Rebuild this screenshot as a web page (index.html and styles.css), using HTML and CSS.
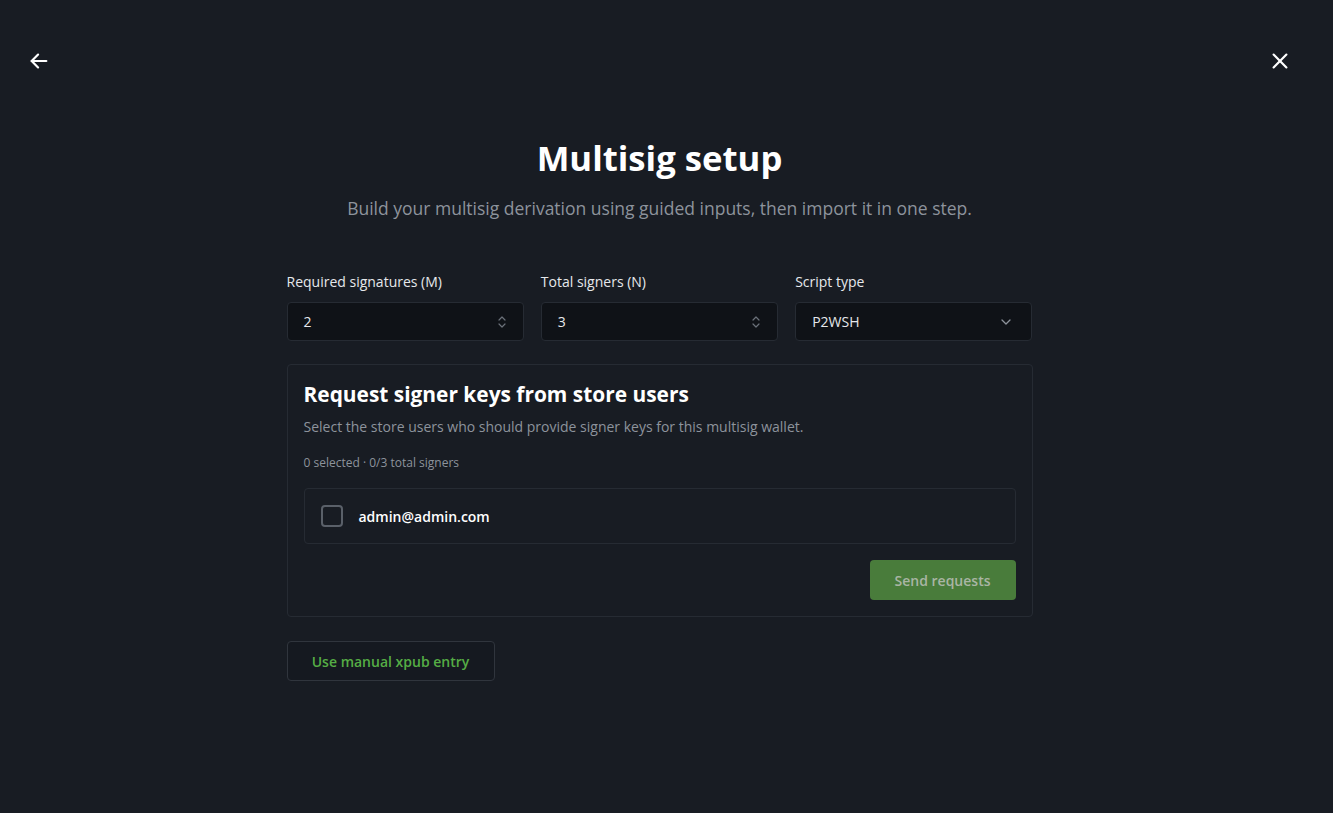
FILE: index.html
```html
<!DOCTYPE html>
<html lang="en">
<head>
<meta charset="utf-8">
<title>Multisig setup</title>
<link rel="stylesheet" href="styles.css">
</head>
<body>
<div class="page">
  <header class="topbar">
    <button class="icon-btn" aria-label="Back">
      <svg width="22" height="22" viewBox="0 0 24 24" fill="none" stroke="currentColor" stroke-width="2.4" stroke-linecap="round" stroke-linejoin="round"><path d="M20 12H4"/><path d="M11 5l-7 7 7 7"/></svg>
    </button>
    <button class="icon-btn" aria-label="Close">
      <svg width="22" height="22" viewBox="0 0 24 24" fill="none" stroke="currentColor" stroke-width="2.4" stroke-linecap="round"><path d="M5 5l14 14"/><path d="M19 5L5 19"/></svg>
    </button>
  </header>

  <main class="content">
    <h1 class="title">Multisig setup</h1>
    <p class="subtitle">Build your multisig derivation using guided inputs, then import it in one step.</p>

    <div class="fields">
      <div class="field">
        <label class="label">Required signatures (M)</label>
        <div class="input">
          <span>2</span>
          <svg class="spin" width="10" height="16" viewBox="0 0 10 16" fill="none" stroke="currentColor" stroke-width="1.2" stroke-linecap="round" stroke-linejoin="round"><path d="M2 6l3-3 3 3"/><path d="M2 10l3 3 3-3"/></svg>
        </div>
      </div>
      <div class="field">
        <label class="label">Total signers (N)</label>
        <div class="input">
          <span>3</span>
          <svg class="spin" width="10" height="16" viewBox="0 0 10 16" fill="none" stroke="currentColor" stroke-width="1.2" stroke-linecap="round" stroke-linejoin="round"><path d="M2 6l3-3 3 3"/><path d="M2 10l3 3 3-3"/></svg>
        </div>
      </div>
      <div class="field">
        <label class="label">Script type</label>
        <div class="input select">
          <span>P2WSH</span>
          <svg class="chev" width="14" height="14" viewBox="0 0 14 14" fill="none" stroke="currentColor" stroke-width="1.3" stroke-linecap="round" stroke-linejoin="round"><path d="M3 5l4 4 4-4"/></svg>
        </div>
      </div>
    </div>

    <section class="card">
      <h2 class="card-title">Request signer keys from store users</h2>
      <p class="card-desc">Select the store users who should provide signer keys for this multisig wallet.</p>
      <p class="card-count">0 selected · 0/3 total signers</p>
      <div class="user-row">
        <span class="checkbox"></span>
        <span class="user-email">admin@admin.com</span>
      </div>
      <div class="card-actions">
        <button class="btn-primary">Send requests</button>
      </div>
    </section>

    <div class="bottom">
      <button class="btn-outline">Use manual xpub entry</button>
    </div>
  </main>
</div>
</body>
</html>
```

FILE: styles.css
```css
* { box-sizing: border-box; }
html, body {
  margin: 0;
  padding: 0;
  background: #181c23;
  color: #ffffff;
  font-family: "Open Sans", "Noto Sans", sans-serif;
}
.page {
  min-height: 813px;
  padding: 40px 42px 0 28px;
}
.topbar {
  display: flex;
  justify-content: space-between;
  align-items: center;
  height: 42px;
}
.icon-btn {
  background: none;
  border: none;
  color: #ffffff;
  padding: 0;
  width: 22px;
  height: 22px;
  display: flex;
  align-items: center;
  justify-content: center;
  cursor: pointer;
}
.content {
  width: 746px;
  margin: 0 auto;
}
.title {
  margin: 52px 0 0 0;
  text-align: center;
  font-size: 34.7px;
  font-weight: 700;
  line-height: 48px;
  letter-spacing: 0;
}
.subtitle {
  margin: 13px 0 0 0;
  text-align: center;
  font-size: 17.5px;
  line-height: 26px;
  color: #8d939c;
}
.fields {
  margin-top: 51px;
  display: grid;
  grid-template-columns: repeat(3, 1fr);
  gap: 17px;
}
.field {
  display: flex;
  flex-direction: column;
}
.label {
  font-size: 14px;
  line-height: 20px;
  color: #e6e8eb;
  margin-bottom: 10px;
}
.input {
  height: 39px;
  background: #0f1217;
  border: 1px solid #262b33;
  border-radius: 4px;
  padding: 0 14px 0 16px;
  display: flex;
  align-items: center;
  justify-content: space-between;
  font-size: 14px;
  color: #e6e8eb;
}
.spin { color: #6b717a; margin-right: 2px; }
.select { padding-left: 16px; padding-right: 18px; }
.chev { color: #8d939c; }
.card {
  margin-top: 23px;
  border: 1px solid #262b33;
  border-radius: 4px;
  padding: 15px 16px 16px 16px;
}
.card-title {
  margin: 0;
  font-size: 20.9px;
  font-weight: 700;
  line-height: 28px;
}
.card-desc {
  margin: 9px 0 0 0;
  font-size: 14px;
  line-height: 20px;
  color: #8d939c;
}
.card-count {
  margin: 17px 0 0 0;
  font-size: 12px;
  line-height: 18px;
  color: #8d939c;
}
.user-row {
  margin-top: 16px;
  height: 56px;
  border: 1px solid #262b33;
  border-radius: 4px;
  display: flex;
  align-items: center;
  padding-left: 16px;
  gap: 16px;
}
.checkbox {
  width: 22px;
  height: 22px;
  border: 2px solid #5a6069;
  border-radius: 4px;
  background: #181c23;
}
.user-email {
  font-size: 14px;
  font-weight: 600;
  color: #ffffff;
}
.card-actions {
  margin-top: 16px;
  display: flex;
  justify-content: flex-end;
}
.btn-primary {
  height: 40px;
  width: 146px;
  border: none;
  border-radius: 4px;
  background: #497c3b;
  color: #a9b5a4;
  font-family: inherit;
  font-size: 14px;
  font-weight: 600;
}
.bottom {
  margin-top: 24px;
}
.btn-outline {
  height: 40px;
  width: 208px;
  background: #151920;
  border: 1px solid #30353d;
  border-radius: 4px;
  color: #55ad45;
  font-family: inherit;
  font-size: 14px;
  font-weight: 600;
}
```
